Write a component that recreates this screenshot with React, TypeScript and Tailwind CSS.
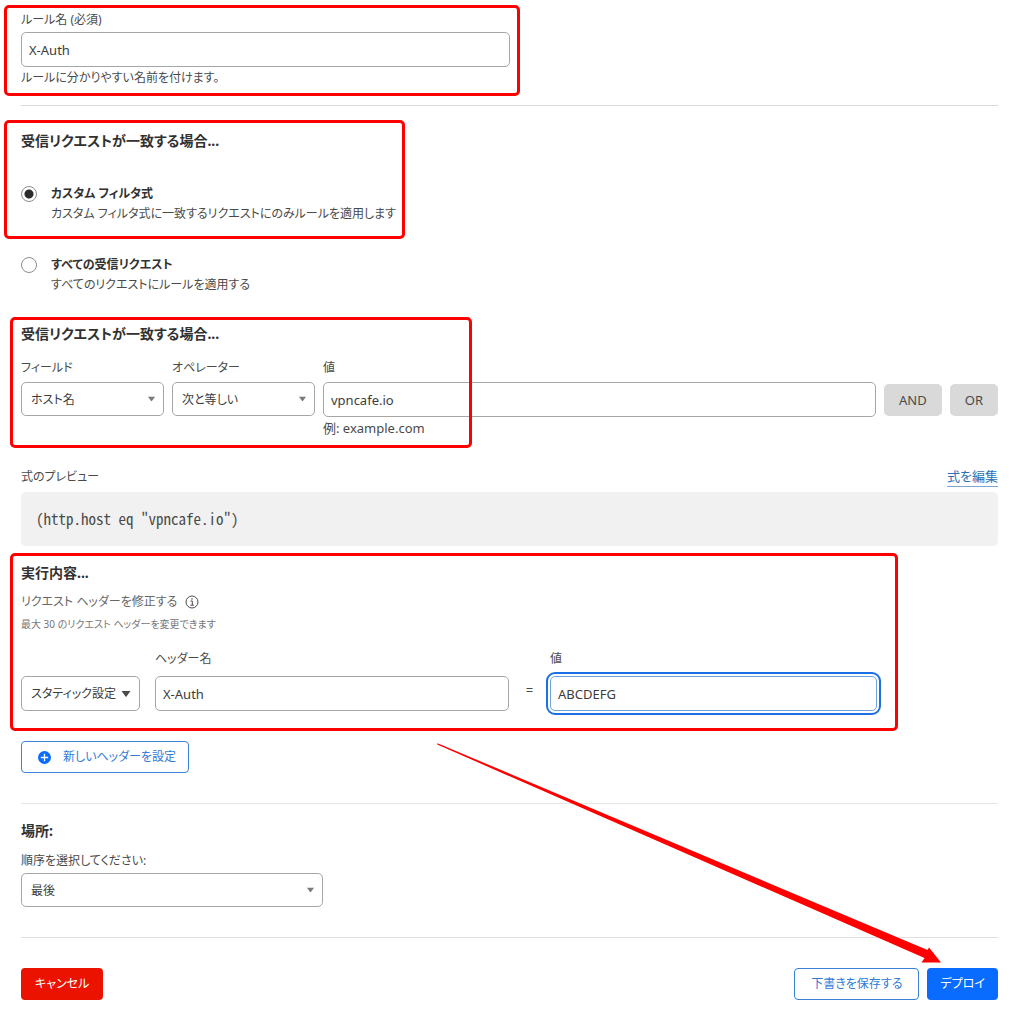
import type { ReactNode } from "react";

const fieldClass =
  "block h-[35px] w-full rounded-[5px] border border-[#a6a6a6] bg-white px-[7px] text-[13px] text-[#3c3c3c] outline-none";

const Highlight = ({ className }: { className: string }) => (
  <div
    aria-hidden="true"
    className={`pointer-events-none absolute z-10 rounded-[5px] border-3 border-[#ff0000] ${className}`}
  />
);

const Heading = ({ children }: { children: ReactNode }) => (
  <h2 className="text-[14px] leading-5 font-bold text-[#313131]">{children}</h2>
);

type SelectProps = {
  id: string;
  options: string[];
  label?: string;
  className?: string;
  dark?: boolean;
};

const Select = ({ id, options, label, className = "h-[34px]", dark }: SelectProps) => (
  <div className="relative">
    <select
      id={id}
      aria-label={label}
      className={`block w-full appearance-none rounded-[5px] border border-[#a6a6a6] bg-white pt-px pr-5 pl-[9px] text-[12px] text-[#3c3c3c] outline-none ${className}`}
    >
      {options.map((option) => (
        <option key={option}>{option}</option>
      ))}
    </select>
    <svg
      viewBox="0 0 10 6"
      className={`pointer-events-none absolute top-1/2 -translate-y-1/2 ${dark ? "right-[9px] h-[6px] w-[10px] fill-[#4a4a4a]" : "right-2 h-[5px] w-[9px] fill-[#7a7a7a]"}`}
    >
      <path d="M0.5 0h9L5.5 5.4a.7.7 0 0 1-1 0z" />
    </svg>
  </div>
);

type ChoiceProps = {
  id: string;
  title: string;
  description: string;
  checked?: boolean;
};

const Choice = ({ id, title, description, checked }: ChoiceProps) => (
  <div className="flex items-start gap-[14px]">
    <input
      type="radio"
      id={id}
      name="match"
      defaultChecked={checked}
      className="mt-[2px] size-4 shrink-0 appearance-none rounded-full border border-[#8c8c8c] bg-white checked:bg-[radial-gradient(circle,#2b2b2b_0_4px,transparent_5px)]"
    />
    <label htmlFor={id} className="block">
      <span className="block font-bold text-[#313131]">{title}</span>
      <span className="block">{description}</span>
    </label>
  </div>
);

const RuleName = () => (
  <section className="relative w-1/2">
    <Highlight className="-top-[5px] -right-[10px] -bottom-2 -left-[17px]" />
    <label htmlFor="rule-name" className="block pb-[2px]">
      ルール名 (必須)
    </label>
    <input id="rule-name" type="text" defaultValue="X-Auth" className={fieldClass} />
    <p className="pt-px">ルールに分かりやすい名前を付けます。</p>
  </section>
);

const MatchChoices = () => (
  <section>
    <div className="relative">
      <Highlight className="-top-[11px] -bottom-[15px] -left-[17px] w-[401px]" />
      <Heading>受信リクエストが一致する場合...</Heading>
      <div className="pt-[33px]">
        <Choice
          id="match-custom"
          title="カスタム フィルタ式"
          description="カスタム フィルタ式に一致するリクエストにのみルールを適用します"
          checked
        />
      </div>
    </div>
    <div className="pt-[31px]">
      <Choice
        id="match-all"
        title="すべての受信リクエスト"
        description="すべてのリクエストにルールを適用する"
      />
    </div>
  </section>
);

const FilterBuilder = () => (
  <section className="relative">
    <Highlight className="-top-[7px] -bottom-[10px] -left-[11px] w-[462px]" />
    <Heading>受信リクエストが一致する場合...</Heading>
    <div className="flex items-start gap-2 pt-[14px]">
      <div className="w-[143px]">
        <label htmlFor="field" className="block pb-1">フィールド</label>
        <Select id="field" options={["ホスト名"]} />
      </div>
      <div className="w-[143px]">
        <label htmlFor="operator" className="block pb-1">オペレーター</label>
        <Select id="operator" options={["次と等しい"]} />
      </div>
      <div className="flex-1">
        <label htmlFor="host" className="block pb-1">値</label>
        <input id="host" type="text" defaultValue="vpncafe.io" className={fieldClass} />
        <p className="pt-px text-[13px]">例: example.com</p>
      </div>
      <div className="flex gap-2 pt-[26px] text-[13px]">
        <button type="button" className="h-8 rounded-[5px] bg-[#d9d9d9] px-[15px] text-[#4a4a4a]">
          AND
        </button>
        <button type="button" className="h-8 rounded-[5px] bg-[#d9d9d9] px-[15px] text-[#4a4a4a]">
          OR
        </button>
      </div>
    </div>
  </section>
);

const Preview = () => (
  <section>
    <div className="flex items-end justify-between">
      <span>式のプレビュー</span>
      <a href="#edit" className="border-b border-[#7ba7cf] text-[13px] leading-[19px] text-[#2c6fb5]">
        式を編集
      </a>
    </div>
    <pre className="mt-[5px] rounded-[5px] bg-[#f1f1f1] px-[15px] py-[17px] font-['Noto_Sans_Mono_CJK_JP','Liberation_Mono',monospace] text-[15px] leading-5">
      (http.host eq "vpncafe.io")
    </pre>
  </section>
);

const HeaderEditor = () => (
  <section>
    <div className="relative">
      <Highlight className="-top-[10px] right-[100px] -bottom-5 -left-[11px]" />
      <Heading>実行内容...</Heading>
      <p className="flex items-center gap-2 pt-[9px] text-[#666]">
        リクエスト ヘッダーを修正する
        <svg viewBox="0 0 14 14" className="size-[14px] fill-none stroke-[#4a4a4a]">
          <circle cx="7" cy="7" r="6" />
          <path d="M5.5 6h1.8v4M5.3 10.2h3.6" />
          <path d="M7 3.2v1.4" strokeWidth="1.4" />
        </svg>
      </p>
      <p className="pt-[2px] text-[10px] text-[#777]">最大 30 のリクエスト ヘッダーを変更できます</p>
      <div className="flex items-end pt-[15px] pr-[121px]">
        <div className="w-[119px]">
          <Select id="mode" label="設定方法" options={["スタティック設定"]} className="h-[35px]" dark />
        </div>
        <div className="ml-[15px] flex-[354]">
          <label htmlFor="header-name" className="block pb-[7px]">ヘッダー名</label>
          <input id="header-name" type="text" defaultValue="X-Auth" className={fieldClass} />
        </div>
        <span className="w-[41px] pb-[11px] text-center text-[13px]">=</span>
        <div className="flex-[327]">
          <label htmlFor="header-value" className="block pb-[7px]">値</label>
          <input
            id="header-value"
            type="text"
            defaultValue="ABCDEFG"
            className="block h-[35px] w-full rounded-[5px] border border-[#6ea3e0] bg-white px-[7px] text-[13px] text-[#3c3c3c] outline-2 outline-offset-2 outline-[#1c6fe4]"
          />
        </div>
      </div>
    </div>
    <button
      type="button"
      className="mt-[30px] flex h-8 items-center gap-3 rounded-[4px] border border-[#3b82d6] pr-3 pl-4 text-[#2f7bd6]"
    >
      <svg viewBox="0 0 12 12" className="size-[13px]">
        <circle cx="6" cy="6" r="6" fill="#0a6cff" />
        <path d="M6 2.6v6.8M2.6 6h6.8" stroke="#fff" strokeWidth="1.2" />
      </svg>
      新しいヘッダーを設定
    </button>
  </section>
);

const Placement = () => (
  <section>
    <Heading>場所:</Heading>
    <label htmlFor="order" className="block pt-[10px] pb-[2px]">
      順序を選択してください:
    </label>
    <div className="w-[302px] max-w-full">
      <Select id="order" options={["最後"]} />
    </div>
  </section>
);

const Actions = () => (
  <footer className="relative flex items-center justify-between">
    <svg
      viewBox="0 0 504 220"
      aria-hidden="true"
      className="pointer-events-none absolute right-[57px] bottom-full z-10 mb-[5px] h-[220px] w-[504px] fill-[#ff0000]"
    >
      <path d="M0.5 0.2L490.500 207L492 204.500L504 219.500L484.500 219.500L487.500 215L0.200 1.500Z" />
    </svg>
    <button type="button" className="h-8 rounded-[4px] bg-[#eb1300] px-[14px] text-white">
      キャンセル
    </button>
    <div className="flex gap-2">
      <button type="button" className="h-8 rounded-[4px] border border-[#3b82d6] px-4 text-[#2f7bd6]">
        下書きを保存する
      </button>
      <button type="button" className="h-8 rounded-[4px] bg-[#0a6cff] px-[13px] text-white">
        デプロイ
      </button>
    </div>
  </footer>
);

export default function App() {
  return (
    <main
      lang="ja"
      className="bg-white pt-[10px] pr-[26px] pb-5 pl-[21px] font-['Noto_Sans','Noto_Sans_CJK_JP',sans-serif] text-[12px] leading-5 text-[#4a4a4a] [font-feature-settings:'palt']"
    >
      <RuleName />
      <hr className="mt-[17px] mb-[25px] border-[#d9d9d9]" />
      <MatchChoices />
      <div className="pt-[29px]">
        <FilterBuilder />
      </div>
      <div className="pt-[29px]">
        <Preview />
      </div>
      <div className="pt-[17px]">
        <HeaderEditor />
      </div>
      <hr className="mt-[30px] mb-[17px] border-[#e6e6e6]" />
      <Placement />
      <hr className="my-[30px] border-[#e0e0e0]" />
      <Actions />
    </main>
  );
}
